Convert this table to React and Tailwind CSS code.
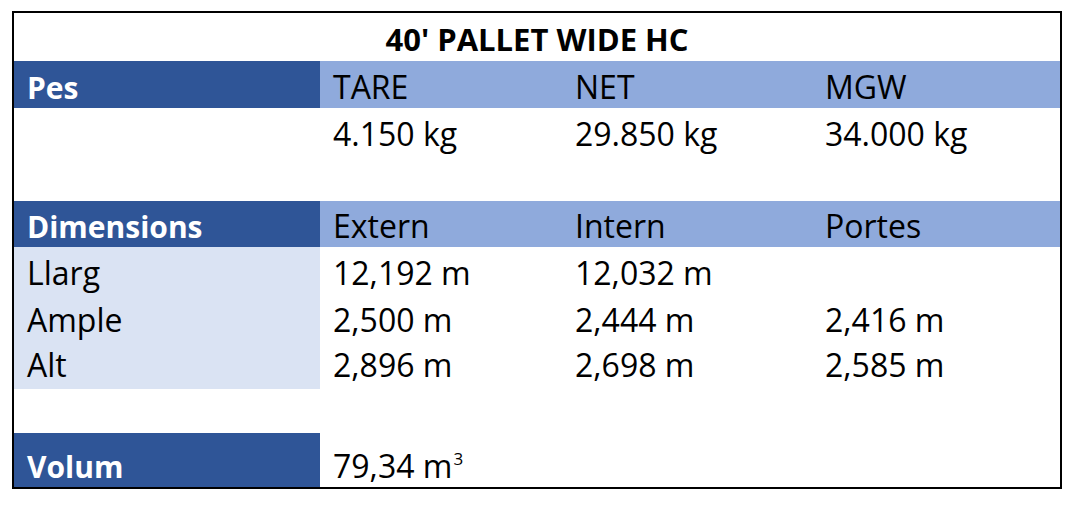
import React from 'react';

const DARK = 'bg-[#2f5597] text-white font-bold';
const LIGHT = 'bg-[#8faadc]';
const PALE = 'bg-[#dae3f3]';

// one spreadsheet-style row: 4 cells, text sits on the bottom of the cell
function Row({ h, pb = 'pb-[5px]', cells, bgs = [] }) {
  return (
    <div className={`grid grid-cols-[306px_242px_250px_1fr] ${h}`}>
      {cells.map((c, i) => (
        <div
          key={i}
          className={`flex items-end leading-none pl-[13px] ${pb} ${bgs[i] || ''} ${i === 0 && bgs[0] === DARK ? 'text-[30px]' : 'text-[32px]'}`}
        >
          {c}
        </div>
      ))}
    </div>
  );
}

export default function App() {
  return (
    <div className="min-h-screen bg-white pt-[11px] pl-[12px]" style={{ fontFamily: '"Open Sans", "Liberation Sans", sans-serif' }}>
      <div className="w-[1050px] border-2 border-black text-black">
        {/* title */}
        <div className="h-[48px] flex items-end justify-center pb-[6px] text-[31px] font-bold leading-none">
          40' PALLET WIDE HC
        </div>

        <Row h="h-[47px]" cells={['Pes', 'TARE', 'NET', 'MGW']} bgs={[DARK, LIGHT, LIGHT, LIGHT]} />
        <Row h="h-[47px]" cells={['', '4.150 kg', '29.850 kg', '34.000 kg']} />
        <div className="h-[46px]" />

        <Row h="h-[46px]" cells={['Dimensions', 'Extern', 'Intern', 'Portes']} bgs={[DARK, LIGHT, LIGHT, LIGHT]} />
        <Row h="h-[46px]" pb="pb-[4px]" cells={['Llarg', '12,192 m', '12,032 m', '']} bgs={[PALE]} />
        <Row h="h-[47px]" pb="pb-[4px]" cells={['Ample', '2,500 m', '2,444 m', '2,416 m']} bgs={[PALE]} />
        <Row h="h-[49px]" pb="pb-[8px]" cells={['Alt', '2,896 m', '2,698 m', '2,585 m']} bgs={[PALE]} />
        <div className="h-[44px]" />

        <Row
          h="h-[54px]"
          cells={[
            'Volum',
            <span>79,34 m<span className="inline-block text-[17px] -translate-y-[13px] ml-px">3</span></span>,
            '',
            '',
          ]}
          bgs={[DARK]}
        />
      </div>
    </div>
  );
}
